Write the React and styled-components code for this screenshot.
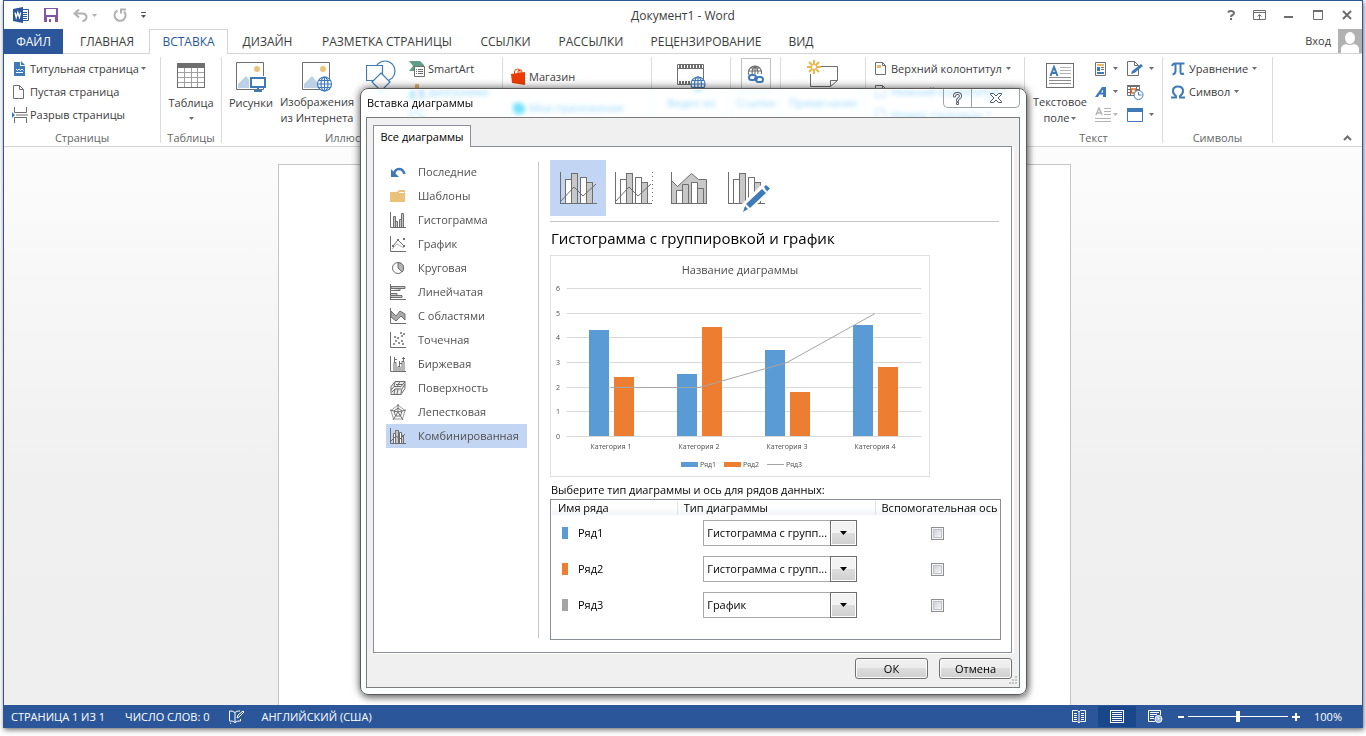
import React from "react";
import styled, { createGlobalStyle, css } from "styled-components";

const BLUE = "#2b579a";
const GREY = "#6e6e6e";
const ACCENT = "#3f7ab8";

const GlobalStyle = createGlobalStyle`
  *, *::before, *::after { box-sizing: border-box; }
  html, body { margin: 0; background: #fff; }
  body, button, input, select, table {
    font-family: "Open Sans", "Noto Sans", sans-serif;
    font-size: 11px;
    line-height: 16px;
  }
  button { margin: 0; padding: 0; border: 0; background: none; color: inherit; }
  svg { display: block; flex: none; }
`;

/* ---------- application window ---------- */

const Page = styled.div`
  height: 100vh;
  min-height: 720px;
  padding: 0 3px 8px;
  overflow: hidden;
`;

const AppWindow = styled.div`
  position: relative;
  height: 100%;
  display: flex;
  flex-direction: column;
  border: 1px solid ${BLUE};
  border-bottom: 0;
  background: #fff;
  color: #3c3c3c;
  box-shadow: 1px 2px 5px rgba(0, 0, 0, 0.55);
`;

const TitleBar = styled.header`
  height: 28px;
  flex: none;
  display: grid;
  grid-template-columns: 1fr auto 1fr;
  align-items: center;
`;

const QuickAccess = styled.div`
  display: flex;
  align-items: center;
  padding-left: 9px;
`;

const QuickButton = styled.button`
  width: ${(p) => p.$w}px;
  height: 24px;
  display: flex;
  align-items: center;
  gap: 4px;
`;

const WindowTitle = styled.h1`
  margin: 0;
  padding-top: 1px;
  font-size: 12px;
  font-weight: 400;
`;

const WindowButtons = styled.div`
  display: flex;
  justify-content: flex-end;
  padding-right: 1px;
`;

const WindowButton = styled.button`
  width: 29px;
  height: 24px;
  display: flex;
  align-items: center;
  justify-content: center;
`;

/* ---------- ribbon ---------- */

const TabRow = styled.nav`
  height: 25px;
  flex: none;
  display: flex;
  border-bottom: 1px solid #d4d4d4;
`;

const RibbonTab = styled.button`
  width: ${(p) => p.$w}px;
  height: 25px;
  font-size: 12px;
  white-space: nowrap;
  text-align: center;
  ${(p) => p.$file && css`background: ${BLUE}; color: #fff; margin-right: 2px;`}
  ${(p) => p.$active && css`
    border: 1px solid #d4d4d4;
    border-bottom: 0;
    background: #fff;
    color: ${BLUE};
  `}
`;

const SignIn = styled.button`
  margin-left: auto;
  height: 24px;
  display: flex;
  align-items: center;
  gap: 7px;
`;

const Ribbon = styled.div`
  height: 93px;
  flex: none;
  display: flex;
  border-bottom: 1px solid #d4d4d4;
`;

const Group = styled.section`
  width: ${(p) => p.$w}px;
  flex: none;
  display: flex;
  flex-direction: column;
  padding-top: 3px;
  border-right: 1px solid transparent;
  border-image: linear-gradient(transparent 4px, #dcdcdc 4px, #dcdcdc 88px, transparent 88px) 1;
`;

const GroupBody = styled.div`
  height: 69px;
  display: flex;
  padding-left: ${(p) => p.$pad || 0}px;
  justify-content: ${(p) => (p.$center ? "center" : "flex-start")};
`;

const GroupName = styled.div`
  padding-top: 4px;
  text-align: center;
  color: #666;
`;

const BigButton = styled.button`
  width: ${(p) => p.$w}px;
  height: 69px;
  display: flex;
  flex-direction: column;
  align-items: center;
  padding-top: 3px;
  white-space: nowrap;
`;

const BigIcon = styled.span`
  height: 35px;
`;

const PressedIcon = styled.span`
  width: 30px;
  height: 35px;
  margin-top: -2px;
  margin-bottom: 2px;
  padding: 6px 6px 0;
  border: 1px solid #c3c3c3;
`;

const Stack = styled.div`
  display: flex;
  flex-direction: column;
  padding-top: ${(p) => p.$top || 0}px;
  padding-left: ${(p) => p.$pad || 0}px;
`;

const SmallButton = styled.button`
  height: ${(p) => p.$h || 23}px;
  display: flex;
  align-items: center;
  gap: ${(p) => p.$gap ?? 4}px;
  white-space: nowrap;
`;

const IconButton = styled(SmallButton)`
  width: ${(p) => p.$w}px;
  ${(p) => p.$off && css`opacity: 0.5; filter: grayscale(1);`}
`;

const CollapseButton = styled.button`
  margin-left: auto;
  align-self: flex-end;
  padding: 5px 10px;
`;

/* ---------- document and status bar ---------- */

const Workspace = styled.main`
  flex: 1;
  min-height: 0;
  padding: 17px 17px 0 0;
  background: linear-gradient(#fcfcfc, #f0f0f0 60%, #efefef);
`;

const Sheet = styled.div`
  width: 793px;
  max-width: 100%;
  height: 100%;
  margin: 0 auto;
  background: #fff;
  border: 1px solid #c6c6c6;
  border-bottom: 0;
`;

const StatusBar = styled.footer`
  height: 23px;
  flex: none;
  display: flex;
  align-items: center;
  padding: 0 20px 0 7px;
  background: ${BLUE};
  color: #fff;
  white-space: nowrap;
`;

const StatusItem = styled.button`
  margin-right: ${(p) => p.$gap || 0}px;
`;

const StatusRight = styled.div`
  margin-left: auto;
  display: flex;
  align-items: center;
`;

const ViewButton = styled.button`
  width: 38px;
  height: 21px;
  display: flex;
  align-items: center;
  justify-content: center;
  background: ${(p) => (p.$active ? "#19478a" : "transparent")};
`;

const ZoomButton = styled.button`
  width: ${(p) => p.$w}px;
  display: flex;
  justify-content: center;
`;

const ZoomSlider = styled.input`
  appearance: none;
  width: 100px;
  height: 11px;
  margin: 0;
  background: linear-gradient(#fff, #fff) center / 100% 1px no-repeat;
  &::-webkit-slider-thumb {
    appearance: none;
    width: 4px;
    height: 11px;
    background: #fff;
  }
`;

const ZoomValue = styled.button`
  width: 38px;
  text-align: right;
`;

/* ---------- dialog ---------- */

const dialogBox = css`
  position: absolute;
  top: 87px;
  left: calc(50% - 323px);
  width: 667px;
  border-radius: 8px;
`;

const GlassBlur = styled.div`
  ${dialogBox}
  height: 40px;
  backdrop-filter: blur(2px);
`;

const GlassTint = styled.div`
  ${dialogBox}
  height: 40px;
  background: #78ccff;
  mix-blend-mode: screen;
`;

const Dialog = styled.div`
  ${dialogBox}
  display: flex;
  flex-direction: column;
  padding: 0 6px 6px 5px;
  border: 1px solid #5a5a5a;
  box-shadow: 0 0 8px rgba(0, 0, 0, 0.65), 2px 4px 6px rgba(0, 0, 0, 0.25), inset 0 0 0 1px #fff;
  background: linear-gradient(transparent 32px, #fdfeff 32px);
  color: #000;
`;

const DialogTitle = styled.div`
  height: 28px;
  display: flex;
  justify-content: space-between;
  padding-left: 1px;
`;

const DialogName = styled.h2`
  margin: 0;
  padding-top: 6px;
  font-size: 11px;
  line-height: 16px;
  font-weight: 400;
`;

const CaptionButtons = styled.div`
  height: 19px;
  display: flex;
  border: 1px solid #9aa0a6;
  border-top: 0;
  border-radius: 0 0 5px 5px;
`;

const CaptionButton = styled.button`
  width: ${(p) => p.$w}px;
  display: flex;
  align-items: center;
  justify-content: center;
  & + & { border-left: 1px solid #9aa0a6; }
`;

const Client = styled.div`
  position: relative;
  padding: 7px 7px 8px 6px;
  border: 1px solid #7c7c7c;
  background: #f0f0f0;
`;

const DialogTab = styled.button`
  display: block;
  position: relative;
  width: 98px;
  height: 22px;
  border: 1px solid #8b8d97;
  border-bottom: 0;
  background: #fff;
  margin-bottom: -1px;
  z-index: 1;
`;

const Pane = styled.div`
  display: flex;
  height: 507px;
  padding: 13px 10px 12px 12px;
  border: 1px solid #8b8d97;
  background: #fff;
  box-shadow: 2px 1px 0 #fff;
`;

const KindList = styled.ul`
  width: 141px;
  margin: 0 11px 0 0;
  padding: 0;
  list-style: none;
`;

const KindButton = styled.button`
  width: 100%;
  height: 24px;
  display: flex;
  align-items: center;
  gap: 12px;
  padding-left: 4px;
  color: #505050;
  background: ${(p) => (p.$active ? "#c2d5f2" : "transparent")};
`;

const Rule = styled.div`
  width: 1px;
  margin: 2px 11px 2px 0;
  background: #c6c6c6;
`;

const Detail = styled.div`
  flex: 1;
  min-width: 0;
  display: flex;
  flex-direction: column;
`;

const Variants = styled.div`
  display: flex;
  margin-right: 2px;
  padding-bottom: 5px;
  border-bottom: 1px solid #c6c6c6;
`;

const Variant = styled.button`
  width: 56px;
  height: 56px;
  display: flex;
  align-items: center;
  justify-content: center;
  background: ${(p) => (p.$active ? "#c2d5f2" : "transparent")};
`;

const VariantTitle = styled.h3`
  margin: 4px 0 5px 1px;
  font-size: 15px;
  line-height: 24px;
  font-weight: 400;
`;

const ChartFrame = styled.div`
  width: 380px;
  border: 1px solid #e0e0e0;
`;

const SeriesCaption = styled.div`
  padding: 5px 0 1px 1px;
`;

const SeriesBox = styled.div`
  height: 141px;
  padding: 1px 1px 0;
  border: 1px solid #8b8d97;
`;

const SeriesTable = styled.table`
  width: 100%;
  table-layout: fixed;
  border-collapse: collapse;
  white-space: nowrap;
`;

const HeadCell = styled.th`
  width: ${(p) => p.$w};
  height: 14px;
  padding: 0 0 0 6px;
  line-height: 14px;
  font-weight: 400;
  text-align: left;
  background: linear-gradient(#fff 40%, #f3f4f6);
  & + & { border-left: 1px solid #e2e3e6; }
`;

const Cell = styled.td`
  height: 36px;
  padding: ${(p) => p.$pad || 0};
  text-align: ${(p) => p.$align || "left"};
`;

const SeriesName = styled.span`
  display: flex;
  align-items: center;
  gap: 10px;
`;

const Swatch = styled.i`
  width: 6px;
  height: 12px;
  background: ${(p) => p.$c};
`;

const Combo = styled.span`
  display: grid;
  grid-template-columns: 100%;
  width: 154px;
  height: 26px;
  & > * { grid-area: 1 / 1; }
`;

const ComboSelect = styled.select`
  appearance: none;
  min-width: 0;
  padding: 0 27px 0 3px;
  border: 1px solid #a9a9a9;
  border-radius: 0;
  background: #fff;
  color: #000;
`;

const ComboArrow = styled.span`
  justify-self: end;
  width: 27px;
  display: flex;
  align-items: center;
  justify-content: center;
  border: 1px solid #6e6e6e;
  box-shadow: inset 0 0 0 1px #fff;
  background: linear-gradient(#f3f3f3 50%, #dedede 50%, #cfcfcf);
  pointer-events: none;
`;

const Check = styled.input`
  appearance: none;
  display: block;
  width: 13px;
  height: 13px;
  margin: 0 auto;
  border: 1px solid #8e8f8f;
  background: linear-gradient(135deg, #c4c8ce, #fff);
  background-clip: padding-box;
  box-shadow: inset 0 0 0 1px #f4f4f4, inset 0 0 0 2px #c0c4ca;
`;

const DialogActions = styled.div`
  display: flex;
  justify-content: flex-end;
  gap: 11px;
  padding-top: 5px;
`;

const PushButton = styled.button`
  width: 73px;
  height: 21px;
  border: 1px solid #707070;
  border-radius: 3px;
  box-shadow: inset 0 0 0 1px #fcfcfc;
  background: linear-gradient(#f2f2f2, #ebebeb 50%, #dddddd 50%, #cfcfcf);
`;

const Grip = styled.span`
  position: absolute;
  right: 1px;
  bottom: 1px;
`;

/* ---------- drawings ---------- */

const Svg = ({ w = 16, h = 16, children, ...rest }) => (
  <svg width={w} height={h} viewBox={`0 0 ${w} ${h}`} fill="none" stroke={GREY} aria-hidden="true" {...rest}>
    {children}
  </svg>
);

const Caret = ({ c = GREY }) => (
  <Svg w={5} h={3} stroke="none"><path d="M0 0h5L2.500 3z" fill={c} /></Svg>
);

const WordLogo = () => (
  <Svg w={17} h={16} stroke="none">
    <path d="M8.500 2.500h7v11h-7z" fill="#fff" stroke={BLUE} />
    <path d="M10 5.500h4M10 7.500h4M10 9.500h4M10 11.500h4" stroke={BLUE} />
    <path d="M0 2l10-2v16L0 14z" fill={BLUE} />
    <path d="M2 5.500l1.200 5 1.600-5 1.600 5 1.300-5" stroke="#fff" strokeWidth="1.300" />
  </Svg>
);

const SaveIcon = () => (
  <Svg w={14} h={14} stroke="none">
    <path d="M0 0h14v14H0z" fill="#8656a6" />
    <path d="M2 1h10v6H2zM3 9h8v5H3z" fill="#fff" />
    <path d="M5 11h2v3H5z" fill="#8656a6" />
  </Svg>
);

const UndoIcon = () => (
  <Svg w={15} h={13} stroke="#b1b1b1" strokeWidth="2">
    <path d="M6 0.500L1.500 4.500L6 8.500M2 4.500h7q4.500 0 4.500 3.500 0 3-4 4.500" />
  </Svg>
);

const RedoIcon = () => (
  <Svg w={14} h={14} stroke="#b1b1b1" strokeWidth="2">
    <path d="M4.500 2.500A5.500 5.500 0 1 0 11 3.500M8 5.500V1.500H13" />
  </Svg>
);

const CustomizeIcon = () => (
  <Svg w={5} h={6} stroke="none"><path d="M0 0h5v1H0zM0 3h5L2.500 6z" fill="#555" /></Svg>
);

const AvatarIcon = () => (
  <Svg w={24} h={24} stroke="none">
    <path d="M0 0h24v24H0z" fill="#b1b1b1" />
    <ellipse cx="12" cy="9" rx="5" ry="6" fill="#fff" />
    <path d="M3 24v-4q0-4 5-5q4 2 8 0q5 1 5 5v4z" fill="#fff" />
  </Svg>
);

const CoverIcon = () => (
  <Svg w={16} h={16} stroke="none">
    <path d="M2 1h6v4h5v10H2z" fill={ACCENT} />
    <path d="M9 0l4 4H9z" fill={ACCENT} />
    <path d="M4 8l1.500 1.500L7 8l1.500 1.500L10 8l1.500 1.500M4 11.500h7" stroke="#fff" />
  </Svg>
);

const BlankIcon = () => (
  <Svg w={16} h={16}>
    <path d="M1.500 1.500h6l4 4v9h-10zM7.500 1.500v4h4" fill="#fff" />
  </Svg>
);

const BreakIcon = () => (
  <Svg w={16} h={16}>
    <path d="M2.500 0v5.500h12V0M2.500 16v-5.500h12V16M4 8h12" />
    <path d="M0 5l3 3-3 3z" fill={ACCENT} stroke="none" />
  </Svg>
);

const TableIcon = () => (
  <Svg w={28} h={32} shapeRendering="crispEdges">
    <path d="M0.500 3.500h27v24H.5z" fill="#fff" />
    <path d="M7.500 8v19M14.500 8v19M20.500 8v19M1 12.500h26M1 17.500h26M1 22.500h26" stroke="#a0a0a0" />
    <path d="M0 3h28v5H0z" fill={GREY} stroke="none" />
  </Svg>
);

const PictureBase = () => (
  <>
    <path d="M.5 2.500h27v27H.5z" fill="#fff" />
    <circle cx="21" cy="9" r="3" fill="#ecc27a" stroke="none" />
    <path d="M2 28V24l8-8 10 12z" fill="#bcd0e6" stroke="none" />
  </>
);

const Globe = ({ x, y, r = 7, c = ACCENT }) => (
  <g transform={`translate(${x} ${y})`} stroke={c} strokeWidth="1.200">
    <circle r={r} fill="#fff" />
    <ellipse rx={r / 2} ry={r} />
    <path d={`M0 ${-r}V${r}M${-r} 0H${r}M${-r + 1} ${-r / 2}H${r - 1}M${-r + 1} ${r / 2}H${r - 1}`} />
  </g>
);

const PicturesIcon = () => (
  <Svg w={30} h={32}>
    <PictureBase />
    <path d="M13 16h17v12H13z" fill="#fff" stroke="none" />
    <path d="M15 18h14v9H15zM22 27v4M18 31h8" stroke={ACCENT} strokeWidth="2" />
  </Svg>
);

const OnlinePicturesIcon = () => (
  <Svg w={31} h={32}><PictureBase /><Globe x={22.5} y={24} /></Svg>
);

const ShapesIcon = () => (
  <Svg w={30} h={32} stroke={ACCENT} strokeWidth="1.200">
    <circle cx="19" cy="11" r="10" fill="#fff" />
    <path d="M.5 5.500h16v15H.5z" fill="#fff" />
    <path d="M15 13l9 9-9 9-9-9z" fill="#fff" />
  </Svg>
);

const SmartArtIcon = () => (
  <Svg w={16} h={16}>
    <path d="M0 0h11l4 4v3H6v3H0l4-5z" fill="#5f9e87" stroke="none" />
    <path d="M5.500 5.500h10v10h-10z" fill="#fff" />
    <path d="M7 8.500h1M9 8.500h5M7 10.500h1M9 10.500h5M7 12.500h1M9 12.500h5" />
  </Svg>
);

const ChartSmallIcon = () => (
  <Svg w={16} h={16} stroke="none">
    <path d="M6 0h4v15H6z" fill="#ecb66a" /><path d="M11 5h4v10h-4z" fill={GREY} /><path d="M1 7h4v8H1z" fill={ACCENT} />
  </Svg>
);

const ScreenshotIcon = () => (
  <Svg w={16} h={16}><path d="M1.500 4.500h10v8h-10zM13 8v7M9 12h7" stroke={ACCENT} /></Svg>
);

const StoreIcon = () => (
  <Svg w={15} h={17} stroke="none">
    <path d="M0 6l14-2v13L1 15z" fill="#eb3c00" />
    <path d="M3.500 7V4q0-3 3-3 2 0 2.500 2.500V6M7 6V3q1-1.500 3-1 1 1 1 4" stroke="#eb3c00" />
  </Svg>
);

const AppsIcon = () => (
  <Svg w={15} h={16} stroke="none"><path d="M2 4l6-2 6 4v6l-6 3-6-3z" fill="#0072c6" /></Svg>
);

const VideoIcon = () => (
  <Svg w={30} h={32}>
    <path d="M1.500 4.500h26v20h-26z" fill="#fff" />
    <path d="M3 6.500h24M3 22.500h24" strokeWidth="3" strokeDasharray="2 1" />
    <path d="M1 8.500h27" />
    <Globe x={22} y={24} />
  </Svg>
);

const LinkIcon = () => (
  <Svg w={16} h={18}>
    <g transform="translate(7 7)" strokeWidth="1.100">
      <path d="M-6 3a6.500 6.500 0 1 1 12 0M-2.500 3Q-4-2 0-6Q4-2 2.500 3M0-6V3M-6-1H6M-5-4H5" />
    </g>
    <path d="M1 9h15v9H1z" fill="#fff" stroke="none" />
    <g stroke={ACCENT} strokeWidth="2">
      <rect x="1" y="10" width="7" height="5" rx="2.500" />
      <rect x="8" y="12" width="7" height="5" rx="2.500" />
      <path d="M6 13.500h4" />
    </g>
  </Svg>
);

const CommentIcon = () => (
  <Svg w={32} h={32}>
    <path d="M12 6.500h18.500v14l-7 6H3.500V14M30.500 20.500h-7v6" fill="none" />
    <path d="M7 0v14M0 7h14M2 2l10 10M12 2L2 12" stroke="#ecb64c" strokeWidth="2" />
    <circle cx="7" cy="7" r="2" fill="#fff" stroke="none" />
  </Svg>
);

const HeaderIcon = ({ bottom }) => (
  <Svg w={13} h={16}>
    <path d="M1.500 1.500h7l3 3v9h-10zM8.500 1.500v3h3" fill="#fff" />
    <path d={bottom ? "M3 9h6v3H3z" : "M3 4h4v3H3z"} fill="#ecb66a" stroke="none" />
  </Svg>
);

const TextBoxIcon = () => (
  <Svg w={28} h={32} shapeRendering="crispEdges">
    <path d="M.5 3.500h27v24H.5z" fill="#fff" />
    <path d="M14 7.500h11M14 10.500h11M14 13.500h11" stroke="#b4b4b4" />
    <path d="M3 17.500h22M3 20.500h22M3 23.500h22" stroke="#8e8e8e" />
    <path d="M4.500 16L8 7l3.500 9M5.500 13h5" stroke={ACCENT} strokeWidth="2" shapeRendering="auto" />
  </Svg>
);

const QuickPartsIcon = () => (
  <Svg w={16} h={16}>
    <path d="M.5 1.500h10v13H.5z" fill="#fff" />
    <path d="M2 3h7v2H2z" fill="#ecb66a" stroke="none" />
    <path d="M2 6h3v4H2zM2 11h7v2H2z" fill={ACCENT} stroke="none" />
    <path d="M6 6.500h3M6 8.500h3" />
  </Svg>
);

const SignatureIcon = () => (
  <Svg w={17} h={16}>
    <path d="M.5.500h7l4 4v10H.5zM7.500.5v4h4" fill="#fff" />
    <path d="M4 13l1-3 9-7 2 2-8.500 7z" fill={ACCENT} stroke="none" />
  </Svg>
);

const WordArtIcon = () => (
  <Svg w={16} h={16} stroke="none">
    <path d="M0 13L7 3h4v10H8v-2.500H4.500L3 13zM6 8.500h2V5.500z" fill={ACCENT} fillRule="evenodd" />
  </Svg>
);

const DateIcon = () => (
  <Svg w={17} h={16}>
    <path d="M.5 2.500h12v9H.5zM0 1.500h13M.5 5.500h12M.5 8.500h5M3.500 3v9M9.500 3v4" />
    <path d="M4.500 5h4v4h-4z" stroke="#e8702a" strokeWidth="1.500" fill="#fff" />
    <circle cx="11.500" cy="11" r="4.500" fill="#fff" stroke={ACCENT} />
    <path d="M11.500 8v3h3" stroke={ACCENT} />
  </Svg>
);

const DropCapIcon = () => (
  <Svg w={16} h={16}>
    <path d="M1 8L4 1l3 7M2 6h4" strokeWidth="1.500" />
    <path d="M9 1.500h7M9 4.500h7M9 7.500h7M0 11.500h16M0 14.500h16" />
  </Svg>
);

const ObjectIcon = () => (
  <Svg w={16} h={16} stroke="none">
    <path d="M.5 2.500h15v12H.5z" fill="#fff" stroke={ACCENT} /><path d="M0 1h16v4H0z" fill={ACCENT} />
  </Svg>
);

const PiIcon = () => (
  <Svg w={14} h={16} stroke={ACCENT}>
    <path d="M1 5q1-2.500 3-2.500h9.500M4.500 3v7q0 3-3 3.500M9.500 3v8q0 3 3.500 1.500" strokeWidth="2" />
  </Svg>
);

const OmegaIcon = () => (
  <Svg w={14} h={16} stroke={ACCENT} strokeWidth="2">
    <path d="M0 13.500h5V12q-3-2-3-5 0-4.500 5-4.500t5 4.500q0 3-3 5v1.500h5" />
  </Svg>
);

const axis = "M.5 0v15.500H16";

const kindIcons = {
  recent: (
    <Svg><path d="M4 10q1-5 5-5 4 0 5.500 5" stroke={ACCENT} strokeWidth="2.500" /><path d="M1 5v8h8z" fill={ACCENT} stroke="none" /></Svg>
  ),
  folder: (
    <Svg stroke="none"><path d="M0 4h7l2-2h6v12H0z" fill="#ecc27a" /><path d="M9 4.500h5" stroke="#fff" /></Svg>
  ),
  column: (
    <Svg><path d={axis} /><path d="M3.500 15V4.500h2V15M5.500 15V9.500h2V15M9.500 15V7.500h2V15M11.500 15V1.500h2V15" fill="#c8c8c8" /></Svg>
  ),
  line: (
    <Svg><path d={axis} /><path d="M2 13l5-5 7 4" stroke="#b5b5b5" /><path d="M3 10l5-6 6 6" /><path d="M7 3h2v2H7zM2 9h2v2H2zM13 9h2v2h-2zM13 2h2v2h-2z" fill={GREY} stroke="none" /></Svg>
  ),
  pie: (
    <Svg><circle cx="8" cy="8" r="5.500" /><path d="M8 8V2.500a5.500 5.500 0 0 1 4 9.500z" fill="#b5b5b5" /></Svg>
  ),
  bar: (
    <Svg><path d="M.5 0v16" /><path d="M1 2.500h14v2H1zM1 6.500h9v-2M1 9.500h6v2H1M1 11.500h11v2H1M1 15.500h15" fill="#c8c8c8" /></Svg>
  ),
  area: (
    <Svg><path d={axis} /><path d="M1 3l5 5 4-5 5 3v6l-4-4-5 5-5-4z" fill="#aaa" /></Svg>
  ),
  scatter: (
    <Svg><path d={axis} /><path d="M3 12h2M5 9h2M8 11h2M11 9h2M7 6h2M4 5h2M11 4h2M13 2h2M12 12h2M10 1h2" strokeWidth="1.500" /></Svg>
  ),
  stock: (
    <Svg><path d={axis} /><path d="M4 15V6.500h2V15M8 15v-4.500h2V15M12 15V5.500h2V15M4.500 1v5M4 3.500h3M9.500 5v5M9 7.500h3M13.500 1v4M12 2.500h3" /></Svg>
  ),
  surface: (
    <Svg>
      <path d="M1 6.500l4-5h10v7l-4 6H1z" fill="#eee" />
      <path d="M1 10l3-3.500h7l4-5M11 14.500l.5-5L15 4M4 6.500L5 2M7.500 6l2-4M2 12l3-3h6M5 9l-1 5M8 9l-1 5M6 4.500h7" />
    </Svg>
  ),
  radar: (
    <Svg><path d="M8 1l7 5.500L12.500 15h-9L1 6.500z" stroke="#999" /><path d="M8 0v8l8-2M8 8l5 8M8 8l-5 8M8 8L0 6" /><path d="M8 4l4 3-1.500 5h-5L4 7z" /></Svg>
  ),
  combo: (
    <Svg><path d={axis} /><path d="M3.500 15V5.500h2V15" fill="#fff" /><path d="M5.500 15V2.500h3V15" fill="#c8c8c8" /><path d="M9.500 15V4.500h2V15" fill="#fff" /><path d="M11.500 15V7.500h2V15" fill="#c8c8c8" /><path d="M1 13l5-5 4 3 5-5" /></Svg>
  ),
};

const ComboBars = () => (
  <g shapeRendering="crispEdges">
    <path d="M5.500 31V7.500h6V31M20.500 31V5.500h6V31" fill="#fff" />
    <path d="M11.500 31V1.500h6V31M26.500 31V10.500h6V31" fill="#c8c8c8" />
    <path d="M.5 0v31.500H37" />
  </g>
);

const VariantClustered = () => (
  <Svg w={36} h={32} overflow="visible"><ComboBars /><path d="M1 29l13-14 9 9 13-12" /></Svg>
);

const VariantSecondary = () => (
  <Svg w={38} h={32}><ComboBars /><path d="M1 29l13-14 9 9 13-12" /><path d="M37.500 0v32" strokeDasharray="1 3" /></Svg>
);

const VariantArea = () => (
  <Svg w={38} h={32}>
    <path d="M.5 8.500l6 6L20.500 1.500l7 6H35.500v24H.5z" fill="#c8c8c8" />
    <path d="M5.500 31V18.500h6V31M20.500 31V10.500h6V31" fill="#fff" />
    <path d="M11.500 31V12.500h6V31M26.500 31V16.500h6V31" fill="#c8c8c8" />
    <path d="M.5 0v31.500H36" />
  </Svg>
);

const VariantCustom = () => (
  <Svg w={36} h={32} overflow="visible">
    <ComboBars />
    <path d="M11 41l3-9L35 11l9 7-22 21z" fill="#fff" stroke="none" />
    <path d="M15 40l2-6 3 3zM18 32L34 17l4 4-16 15zM36 15l2-2 4 3.500-3 3z" fill={ACCENT} stroke="none" />
  </Svg>
);

const ProofIcon = () => (
  <Svg w={16} h={14} stroke="#fff">
    <path d="M6 2.500Q3 .5.500 1v10q3-.5 5.500 1.500v-10M6 2.500Q8 .5 11 1M6 12.500q2-2 5.500-1.500V9" />
    <path d="M8 8l1-3 5-4 1 1-5 5zM2 13l-1 .5" />
  </Svg>
);

const ReadIcon = () => (
  <Svg w={14} h={13} stroke="#fff">
    <path d="M.5.500h5L7 2 8.500.5h5v11h-5L7 13 5.500 11.500h-5zM7 2v10" />
    <path d="M2 3.500h3M2 5.500h3M2 7.500h3M2 9.500h3M9 3.500h3M9 5.500h3M9 7.500h3M9 9.500h3" />
  </Svg>
);

const PrintIcon = () => (
  <Svg w={14} h={13} stroke="#fff" shapeRendering="crispEdges">
    <path d="M.5.500h13v12H.5zM2 2.500h10M2 4.500h10M2 6.500h10M2 8.500h10M2 10.500h10" />
  </Svg>
);

const WebIcon = () => (
  <Svg w={15} h={13} stroke="#fff">
    <path d="M7 11.500H.5V.5h12V5M2 2.500h9M2 4.500h7M2 6.500h4M2 8.500h4" />
    <circle cx="10.500" cy="9" r="3.500" fill="#9db9df" />
    <path d="M9 7l2 1-1 2" />
  </Svg>
);

/* ---------- chart preview ---------- */

const categories = [
  { name: "Категория 1", a: 4.3, b: 2.4, c: 2 },
  { name: "Категория 2", a: 2.5, b: 4.4, c: 2 },
  { name: "Категория 3", a: 3.5, b: 1.8, c: 3 },
  { name: "Категория 4", a: 4.5, b: 2.8, c: 5 },
];

const yOf = (v) => Math.round(180 - v * 24.7);
const xOf = (i) => 60 + Math.floor(i * 88.3);

const ChartPreview = () => (
  <svg width="100%" viewBox="0 0 378 220" role="img" aria-label="Название диаграммы" fontFamily="Open Sans, Noto Sans, sans-serif" fill="#4d4d4d">
    <text x="189" y="18" fontSize="11" textAnchor="middle">Название диаграммы</text>
    {[0, 1, 2, 3, 4, 5, 6].map((v) => (
      <g key={v}>
        <path d={`M16 ${yOf(v)}.5H370`} stroke="#d9d9d9" />
        <text x="7" y={yOf(v) + 3} fontSize="7" textAnchor="middle">{v}</text>
      </g>
    ))}
    {categories.map((c, i) => (
      <g key={c.name}>
        <path d={`M${xOf(i) - 22} 180V${yOf(c.a)}h20V180z`} fill="#5b9bd5" />
        <path d={`M${xOf(i) + 3} 180V${yOf(c.b)}h20V180z`} fill="#ed7d31" />
        <text x={xOf(i)} y="193" fontSize="7" textAnchor="middle">{c.name}</text>
      </g>
    ))}
    <polyline points={categories.map((c, i) => `${xOf(i)},${yOf(c.c) + 0.5}`).join(" ")} fill="none" stroke="#a5a5a5" />
    <path d="M130 206h17v5h-17z" fill="#5b9bd5" />
    <path d="M173 206h17v5h-17z" fill="#ed7d31" />
    <path d="M216 208.500h17" stroke="#a5a5a5" />
    <text x="149" y="211" fontSize="7">Ряд1</text>
    <text x="192" y="211" fontSize="7">Ряд2</text>
    <text x="235" y="211" fontSize="7">Ряд3</text>
  </svg>
);

/* ---------- content ---------- */

const tabs = [
  ["ФАЙЛ", 59], ["ГЛАВНАЯ", 84], ["ВСТАВКА", 79], ["ДИЗАЙН", 79], ["РАЗМЕТКА СТРАНИЦЫ", 160],
  ["ССЫЛКИ", 77], ["РАССЫЛКИ", 94], ["РЕЦЕНЗИРОВАНИЕ", 136], ["ВИД", 54],
];

const kinds = [
  ["recent", "Последние"], ["folder", "Шаблоны"], ["column", "Гистограмма"], ["line", "График"],
  ["pie", "Круговая"], ["bar", "Линейчатая"], ["area", "С областями"], ["scatter", "Точечная"],
  ["stock", "Биржевая"], ["surface", "Поверхность"], ["radar", "Лепестковая"], ["combo", "Комбинированная"],
];

const variants = [
  ["Гистограмма с группировкой и график", VariantClustered],
  ["Гистограмма и график на вспомогательной оси", VariantSecondary],
  ["С областями и гистограмма", VariantArea],
  ["Настраиваемая комбинация", VariantCustom],
];

const series = [
  ["Ряд1", "#5b9bd5", "Гистограмма с групп..."],
  ["Ряд2", "#ed7d31", "Гистограмма с групп..."],
  ["Ряд3", "#a5a5a5", "График"],
];

const RibbonGroups = () => (
  <Ribbon>
    <Group $w={157}>
      <GroupBody $pad={8}>
        <Stack>
          <SmallButton $gap={2}><CoverIcon />Титульная страница<Caret /></SmallButton>
          <SmallButton $gap={2}><BlankIcon />Пустая страница</SmallButton>
          <SmallButton $gap={2}><BreakIcon />Разрыв страницы</SmallButton>
        </Stack>
      </GroupBody>
      <GroupName>Страницы</GroupName>
    </Group>
    <Group $w={61}>
      <GroupBody $center>
        <BigButton $w={56}><BigIcon><TableIcon /></BigIcon>Таблица<Svg w={5} h={12} stroke="none"><path d="M0 6h5L2.500 9z" fill={GREY} /></Svg></BigButton>
      </GroupBody>
      <GroupName>Таблицы</GroupName>
    </Group>
    <Group $w={281}>
      <GroupBody $pad={3}>
        <BigButton $w={52}><BigIcon><PicturesIcon /></BigIcon>Рисунки</BigButton>
        <BigButton $w={80}><BigIcon><OnlinePicturesIcon /></BigIcon>Изображения<br />из Интернета</BigButton>
        <BigButton $w={48} aria-label="Фигуры"><BigIcon><ShapesIcon /></BigIcon></BigButton>
        <Stack $pad={4}>
          <SmallButton $gap={3}><SmartArtIcon />SmartArt</SmallButton>
          <SmallButton $gap={3}><ChartSmallIcon />Диаграмма</SmallButton>
          <SmallButton $gap={3} aria-label="Снимок"><ScreenshotIcon /></SmallButton>
        </Stack>
      </GroupBody>
      <GroupName>Иллюстрации</GroupName>
    </Group>
    <Group $w={149}>
      <GroupBody $pad={8}>
        <Stack $top={4}>
          <SmallButton $h={31} $gap={3}><StoreIcon />Магазин</SmallButton>
          <SmallButton $h={31} $gap={3}><AppsIcon />Мои приложения</SmallButton>
        </Stack>
      </GroupBody>
    </Group>
    <Group $w={79}>
      <GroupBody $center>
        <BigButton $w={70}><BigIcon><VideoIcon /></BigIcon>Видео из</BigButton>
      </GroupBody>
    </Group>
    <Group $w={50}>
      <GroupBody $center>
        <BigButton $w={48}><PressedIcon><LinkIcon /></PressedIcon>Ссылки</BigButton>
      </GroupBody>
    </Group>
    <Group $w={85}>
      <GroupBody $center>
        <BigButton $w={80}><BigIcon><CommentIcon /></BigIcon>Примечание</BigButton>
      </GroupBody>
    </Group>
    <Group $w={159}>
      <GroupBody $pad={8}>
        <Stack>
          <SmallButton><HeaderIcon />Верхний колонтитул<Caret /></SmallButton>
          <SmallButton><HeaderIcon bottom />Нижний колонтитул<Caret /></SmallButton>
          <SmallButton><HeaderIcon />Номер страницы<Caret /></SmallButton>
        </Stack>
      </GroupBody>
    </Group>
    <Group $w={138}>
      <GroupBody $pad={4}>
        <BigButton $w={62}>
          <BigIcon><TextBoxIcon /></BigIcon>Текстовое
          <SmallButton as="span" $h={16} $gap={2}>поле<Caret /></SmallButton>
        </BigButton>
        <Stack $pad={4}>
          <IconButton $w={32} $gap={2} aria-label="Экспресс-блоки"><QuickPartsIcon /><Caret /></IconButton>
          <IconButton $w={32} $gap={2} aria-label="WordArt"><WordArtIcon /><Caret /></IconButton>
          <IconButton $w={32} $gap={2} $off aria-label="Буквица"><DropCapIcon /><Caret /></IconButton>
        </Stack>
        <Stack>
          <IconButton $w={32} $gap={5} aria-label="Строка подписи"><SignatureIcon /><Caret /></IconButton>
          <IconButton $w={32} aria-label="Дата и время"><DateIcon /></IconButton>
          <IconButton $w={32} $gap={6} aria-label="Объект"><ObjectIcon /><Caret /></IconButton>
        </Stack>
      </GroupBody>
      <GroupName>Текст</GroupName>
    </Group>
    <Group $w={110}>
      <GroupBody $pad={8}>
        <Stack>
          <SmallButton><PiIcon />Уравнение<Caret /></SmallButton>
          <SmallButton><OmegaIcon />Символ<Caret /></SmallButton>
        </Stack>
      </GroupBody>
      <GroupName>Символы</GroupName>
    </Group>
    <CollapseButton aria-label="Свернуть ленту">
      <Svg w={9} h={6} strokeWidth="2"><path d="M1 5l3.500-3.500L8 5" /></Svg>
    </CollapseButton>
  </Ribbon>
);

const ChartDialog = () => (
  <Dialog role="dialog" aria-labelledby="dialog-name">
    <DialogTitle>
      <DialogName id="dialog-name">Вставка диаграммы</DialogName>
      <CaptionButtons>
        <CaptionButton $w={27} aria-label="Справка">
          <Svg w={11} h={13} strokeLinecap="round">
            <path d="M2.500 4q0-2.500 3-2.500t3 2.500q0 1.500-1.500 2.300T5.500 8.500M5.500 11.300v.2" stroke="#4b5260" strokeWidth="3" />
            <path d="M2.500 4q0-2.500 3-2.500t3 2.500q0 1.500-1.500 2.300T5.500 8.500M5.500 11.300v.2" stroke="#fff" strokeWidth="1.200" />
          </Svg>
        </CaptionButton>
        <CaptionButton $w={48} aria-label="Закрыть">
          <Svg w={12} h={10}>
            <path d="M.5.500h3L6 3l2.500-2.500h3v1L8 5l3.500 3.500v1h-3L6 7 3.500 9.500h-3v-1L4 5 .5 1.500z" fill="#fff" stroke="#4b5260" />
          </Svg>
        </CaptionButton>
      </CaptionButtons>
    </DialogTitle>
    <Client>
      <DialogTab>Все диаграммы</DialogTab>
      <Pane>
        <KindList>
          {kinds.map(([icon, label]) => (
            <li key={icon}>
              <KindButton $active={icon === "combo"}>{kindIcons[icon]}{label}</KindButton>
            </li>
          ))}
        </KindList>
        <Rule />
        <Detail>
          <Variants>
            {variants.map(([label, Icon], i) => (
              <Variant key={label} $active={i === 0} aria-label={label}><Icon /></Variant>
            ))}
          </Variants>
          <VariantTitle>Гистограмма с группировкой и график</VariantTitle>
          <ChartFrame><ChartPreview /></ChartFrame>
          <SeriesCaption>Выберите тип диаграммы и ось для рядов данных:</SeriesCaption>
          <SeriesBox>
            <SeriesTable>
              <thead>
                <tr>
                  <HeadCell $w="28%">Имя ряда</HeadCell>
                  <HeadCell>Тип диаграммы</HeadCell>
                  <HeadCell $w="124px">Вспомогательная ось</HeadCell>
                </tr>
              </thead>
              <tbody>
                {series.map(([name, color, kind]) => (
                  <tr key={name}>
                    <Cell $pad="0 0 0 10px"><SeriesName><Swatch $c={color} />{name}</SeriesName></Cell>
                    <Cell $pad="0 0 0 26px">
                      <Combo>
                        <ComboSelect aria-label={`Тип диаграммы: ${name}`}><option>{kind}</option></ComboSelect>
                        <ComboArrow><Svg w={7} h={4} stroke="none"><path d="M0 0h7L3.500 4z" fill="#000" /></Svg></ComboArrow>
                      </Combo>
                    </Cell>
                    <Cell $align="center"><Check type="checkbox" aria-label={`Вспомогательная ось: ${name}`} /></Cell>
                  </tr>
                ))}
              </tbody>
            </SeriesTable>
          </SeriesBox>
        </Detail>
      </Pane>
      <DialogActions>
        <PushButton>ОК</PushButton>
        <PushButton>Отмена</PushButton>
      </DialogActions>
      <Grip>
        <Svg w={10} h={10} stroke="none"><path d="M7 0h2v2H7zM4 3h2v2H4zM7 3h2v2H7zM1 6h2v2H1zM4 6h2v2H4zM7 6h2v2H7z" fill="#c4c4c4" /></Svg>
      </Grip>
    </Client>
  </Dialog>
);

export default function App() {
  return (
    <Page>
      <GlobalStyle />
      <AppWindow>
        <TitleBar>
          <QuickAccess>
            <QuickButton $w={31} aria-label="Word"><WordLogo /></QuickButton>
            <QuickButton $w={29} aria-label="Сохранить"><SaveIcon /></QuickButton>
            <QuickButton $w={40} aria-label="Отменить"><UndoIcon /><Caret c="#b1b1b1" /></QuickButton>
            <QuickButton $w={28} aria-label="Повторить"><RedoIcon /></QuickButton>
            <QuickButton $w={10} aria-label="Настройка панели"><CustomizeIcon /></QuickButton>
          </QuickAccess>
          <WindowTitle>Документ1 - Word</WindowTitle>
          <WindowButtons>
            <WindowButton aria-label="Справка">
              <Svg w={8} h={10} strokeWidth="2"><path d="M1 2.500Q1.500 1 4 1t3 2q0 1.500-1.500 2T4 7M4 8v2" /></Svg>
            </WindowButton>
            <WindowButton aria-label="Параметры ленты">
              <Svg w={13} h={10}><path d="M.5.500h12v9H.5zM1 2.500h11M6.500 9V4.500M4.500 6.500l2-2 2 2" /></Svg>
            </WindowButton>
            <WindowButton aria-label="Свернуть"><Svg w={9} h={6} stroke="none"><path d="M0 4h9v2H0z" fill={GREY} /></Svg></WindowButton>
            <WindowButton aria-label="Развернуть"><Svg w={10} h={10}><path d="M.5 1.500h9v8h-9z" /><path d="M0 1h10" strokeWidth="2" /></Svg></WindowButton>
            <WindowButton aria-label="Закрыть"><Svg w={10} h={10} strokeWidth="2"><path d="M1 1l8 8M9 1L1 9" /></Svg></WindowButton>
          </WindowButtons>
        </TitleBar>
        <TabRow>
          {tabs.map(([label, w], i) => (
            <RibbonTab key={label} $w={w} $file={i === 0} $active={i === 2}>{label}</RibbonTab>
          ))}
          <SignIn>Вход<AvatarIcon /></SignIn>
        </TabRow>
        <RibbonGroups />
        <Workspace><Sheet /></Workspace>
        <StatusBar>
          <StatusItem $gap={20}>СТРАНИЦА 1 ИЗ 1</StatusItem>
          <StatusItem $gap={20}>ЧИСЛО СЛОВ: 0</StatusItem>
          <StatusItem $gap={16} aria-label="Проверка правописания"><ProofIcon /></StatusItem>
          <StatusItem>АНГЛИЙСКИЙ (США)</StatusItem>
          <StatusRight>
            <ViewButton aria-label="Режим чтения"><ReadIcon /></ViewButton>
            <ViewButton $active aria-label="Разметка страницы"><PrintIcon /></ViewButton>
            <ViewButton aria-label="Веб-документ"><WebIcon /></ViewButton>
            <ZoomButton $w={14} aria-label="Уменьшить"><Svg w={6} h={2} stroke="none"><path d="M0 0h6v2H0z" fill="#fff" /></Svg></ZoomButton>
            <ZoomSlider type="range" min="0" max="100" defaultValue="50" aria-label="Масштаб" />
            <ZoomButton $w={16} aria-label="Увеличить"><Svg w={8} h={8} stroke="none"><path d="M3 0h2v3h3v2H5v3H3V5H0V3h3z" fill="#fff" /></Svg></ZoomButton>
            <ZoomValue>100%</ZoomValue>
          </StatusRight>
        </StatusBar>
        <GlassBlur />
        <GlassTint />
        <ChartDialog />
      </AppWindow>
    </Page>
  );
}
